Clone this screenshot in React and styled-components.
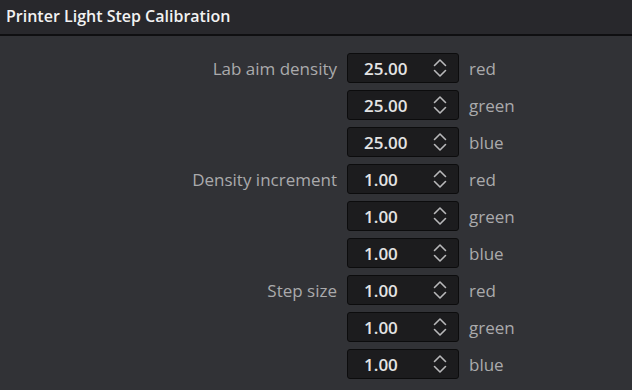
import styled, {createGlobalStyle} from "styled-components"

const GlobalStyle = createGlobalStyle`
  html, body {
    margin: 0;
    padding: 0;
    background: #313236;
  }
  body {
    font-family: "Open Sans", "Noto Sans", sans-serif;
  }
`

const groups = [
  {label: "Lab aim density", value: "25.00"},
  {label: "Density increment", value: "1.00"},
  {label: "Step size", value: "1.00"},
]
const channels = ["red", "green", "blue"]

function Chevrons() {
  return (
    <svg width="14" height="20" viewBox="0 0 14 20" fill="none" stroke="#b8b8ba" strokeWidth="1.6" strokeLinecap="round" strokeLinejoin="round">
      <path d="M1.5 7.5 L7 2 L12.5 7.5"/>
      <path d="M1.5 12.5 L7 18 L12.5 12.5"/>
    </svg>
  )
}

export default function App() {
  return (
    <Panel>
      <GlobalStyle/>
      <Header>Printer Light Step Calibration</Header>
      <Body>
        {groups.map((g) => channels.map((c, i) => (
          <Row key={g.label + c}>
            <Label>{i === 0 ? g.label : ""}</Label>
            <Spin>
              <span>{g.value}</span>
              <Chevrons/>
            </Spin>
            <Channel>{c}</Channel>
          </Row>
        )))}
      </Body>
    </Panel>
  )
}

const Panel = styled.div`
  width: 632px;
  height: 390px;
  overflow: hidden;
  background: #313236;
`
const Header = styled.header`
  height: 36px;
  box-sizing: border-box;
  padding: 5px 0 0 6px;
  background: #28282c;
  border-bottom: 2px solid #0f0f11;
  color: #f2f2f2;
  font-size: 16px;
  font-weight: 600;
  line-height: 22px;
`
const Body = styled.section`
  display: grid;
  grid-template-columns: 337px 112px auto;
  column-gap: 10px;
  row-gap: 7px;
  padding-top: 17px;
`
const Row = styled.div`
  display: contents;
`
const Label = styled.div`
  text-align: right;
  align-self: center;
  color: #aaaaac;
  font-size: 17px;
`
const Spin = styled.div`
  height: 30px;
  box-sizing: border-box;
  display: flex;
  align-items: center;
  justify-content: space-between;
  padding: 0 11px 0 16px;
  background: #1c1c1e;
  border: 1px solid #0c0c0d;
  border-radius: 3px;

  span {
    color: #e4e4e4;
    font-size: 17px;
    font-weight: 600;
  }
`
const Channel = styled.div`
  align-self: center;
  color: #aaaaac;
  font-size: 17px;
`
